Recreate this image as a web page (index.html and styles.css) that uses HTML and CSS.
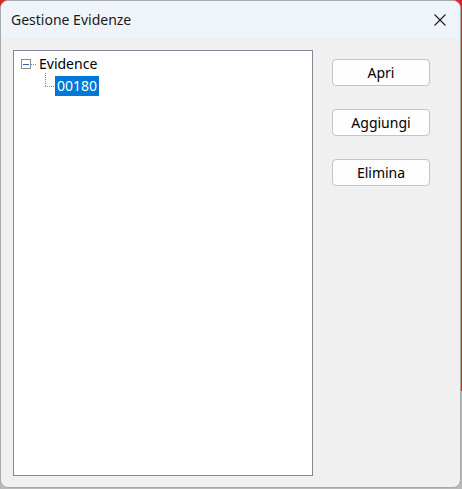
FILE: index.html
```html
<html>

<head>
    <link rel="stylesheet" href="styles.css">
</head>

<body>
    <div class="window">
        <div class="titlebar">
            <span class="title">Gestione Evidenze</span>
            <span class="close">
                <svg width="12" height="12" viewBox="0 0 12 12">
                    <path d="M0.5 0.5 L11.5 11.5 M11.5 0.5 L0.5 11.5" stroke="#1b1b1b" stroke-width="1.1" fill="none" />
                </svg>
            </span>
        </div>
        <div class="content">
            <div class="tree">
                <div class="node">
                    <span class="expander"><span class="minus"></span></span>
                    <span class="hline"></span>
                    <span class="label">Evidence</span>
                </div>
                <div class="node child">
                    <span class="connector"></span>
                    <span class="label selected">00180</span>
                </div>
            </div>
            <div class="actions">
                <button class="btn">Apri</button>
                <button class="btn">Aggiungi</button>
                <button class="btn">Elimina</button>
            </div>
        </div>
    </div>
</body>

</html>
```

FILE: styles.css
```css
* {
    box-sizing: border-box;
}

html,
body {
    margin: 0;
    padding: 0;
    width: 462px;
    height: 489px;
    overflow: hidden;
}

body {
    /* デスクトップ側の背景 */
    background: linear-gradient(to bottom, #d8262a 0, #d8262a 80%, #b9b9b9 80%);
    font-family: "Noto Sans", "Liberation Sans", sans-serif;
    font-size: 14px;
    color: #000;
}

.window {
    width: 461px;
    height: 488px;
    border: 1px solid #a9a9a9;
    border-radius: 8px;
    overflow: hidden;
    background-color: #f0f0f0;
    display: flex;
    flex-direction: column;
}

.titlebar {
    height: 37px;
    flex: none;
    background-color: #eef4f9;
    display: flex;
    align-items: center;
    padding-left: 10px;
}

.title {
    font-size: 14px;
    color: #1a1a1a;
    flex: 1;
}

.close {
    width: 12px;
    height: 12px;
    margin-right: 14px;
    display: flex;
}

.content {
    flex: 1;
    display: flex;
    padding: 12px 0 0 12px;
}

.tree {
    width: 300px;
    height: 426px;
    border: 1px solid #838794;
    background-color: #fff;
    padding-top: 2px;
}

.node {
    height: 22px;
    display: flex;
    align-items: center;
}

.expander {
    width: 10px;
    height: 10px;
    margin-left: 7px;
    border: 1px solid #8c8c8c;
    display: flex;
    align-items: center;
    justify-content: center;
}

.minus {
    width: 6px;
    height: 1px;
    background-color: #2c5fb8;
}

.hline {
    width: 6px;
    height: 1px;
    background: repeating-linear-gradient(to right, #8a8a8a 0, #8a8a8a 1px, transparent 1px, transparent 2px);
}

.label {
    padding: 0 1px 0 2px;
    line-height: 20px;
}

.child .connector {
    align-self: flex-start;
    margin-left: 31px;
    margin-top: -2px;
    width: 10px;
    height: 14px;
    background:
        repeating-linear-gradient(to bottom, #8a8a8a 0, #8a8a8a 1px, transparent 1px, transparent 2px) left top / 1px 100% no-repeat,
        repeating-linear-gradient(to right, #8a8a8a 0, #8a8a8a 1px, transparent 1px, transparent 2px) left bottom / 100% 1px no-repeat;
}

.selected {
    background-color: #0078d7;
    color: #fff;
    padding: 0 2px;
    height: 20px;
}

.actions {
    display: flex;
    flex-direction: column;
    gap: 23px;
    margin-left: 19px;
    padding-top: 9px;
}

.btn {
    width: 98px;
    height: 27px;
    border: 1px solid #c4c4c4;
    border-radius: 4px;
    background-color: #fdfdfd;
    font-family: inherit;
    font-size: 14px;
    color: #000;
    padding: 0;
}
```
